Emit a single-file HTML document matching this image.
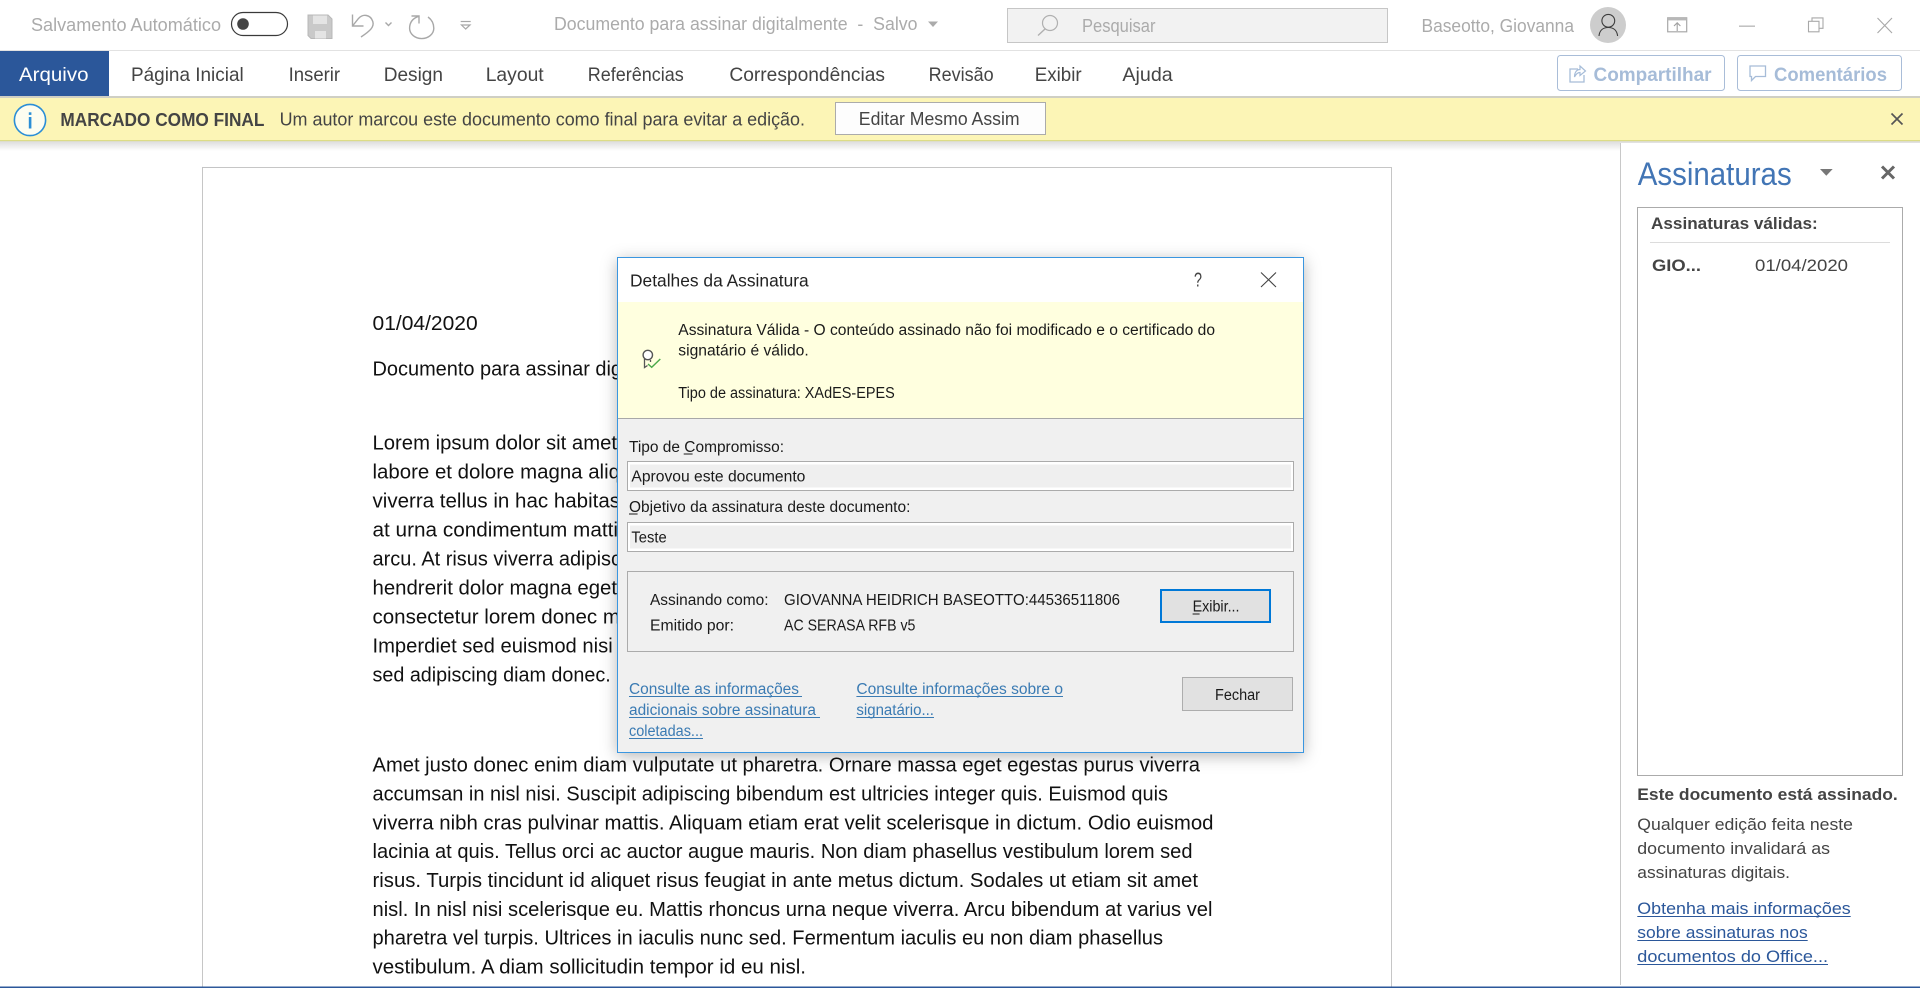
<!DOCTYPE html>
<html lang="pt-BR">
<head>
<meta charset="utf-8">
<title>Documento para assinar digitalmente</title>
<style>
html,body{margin:0;padding:0;background:#fff;width:1920px;height:988px;overflow:hidden}
svg{display:block;position:absolute;left:0;top:0}
text{font-family:"Liberation Sans",sans-serif;white-space:pre}
.tb{font-size:18px;fill:#ababab}
.tab{font-size:19.5px;fill:#444}
.act{font-size:19.5px;fill:#a6bcd8;font-weight:bold}
.bar{font-size:18.5px;fill:#444}
.doc{font-size:20px;fill:#111}
.dlg{font-size:15.5px;fill:#1a1a1a}
.lnk{font-size:15.5px;fill:#3b7bb3}
.pane{font-size:17px;fill:#444}
.paneb{font-size:17px;fill:#444;font-weight:bold}
.panel{font-size:17px;fill:#2b579a}
.ic{fill:none;stroke:#a8a8a8;stroke-width:1.4}
</style>
</head>
<body>
<svg width="1920" height="988" viewBox="0 0 1920 988" xmlns="http://www.w3.org/2000/svg">
<defs>
<linearGradient id="sh" x1="0" y1="0" x2="0" y2="1"><stop offset="0" stop-color="#d8d8d8"/><stop offset="1" stop-color="#fff"/></linearGradient>
<filter id="ds" x="-10%" y="-10%" width="120%" height="120%"><feDropShadow dx="0" dy="3" stdDeviation="8" flood-color="#000" flood-opacity=".3"/></filter>
</defs>

<!-- title bar -->
<rect x="0" y="50" width="1920" height="1" fill="#e2e2e2"/>
<text class="tb" x="31" y="31" textLength="190" lengthAdjust="spacingAndGlyphs">Salvamento Automático</text>
<rect x="231.5" y="12.5" width="56" height="23" rx="11.5" fill="#fff" stroke="#3a3a3a" stroke-width="1.2"/>
<circle cx="243" cy="24" r="5.8" fill="#444"/>
<!-- save -->
<path d="M308 15H328L332 19V38.5H311L308 35.5Z" fill="#c9c9c9" stroke="#b8b8b8"/>
<rect x="313" y="15.5" width="14" height="8.5" fill="#e4e4e4"/>
<rect x="315" y="31" width="11" height="7.5" fill="#e4e4e4"/>
<!-- undo -->
<path class="ic" d="M352.5 14.5V26H363.5M352.5 26L358.5 18.5C363 13.5 370.5 14.5 372.8 21.5C374.5 27 370 31 361 37"/>
<path class="ic" d="M385.5 22.5L388.5 25.5L391.5 22.5" stroke-width="1.2"/>
<!-- redo -->
<path class="ic" d="M411.5 16H419V23.5M418.8 16.3C412 18.5 409.6 23 409.6 28.3A12.1 10.3 0 0 0 433.8 28.3C433.8 23 431.5 19.5 428 17"/>
<!-- customize -->
<path d="M460.7 21.5H470.7" stroke="#a8a8a8" stroke-width="1.2"/>
<path d="M461.5 25H470L465.7 29Z" fill="none" stroke="#a8a8a8" stroke-width="1.2"/>

<text class="tb" x="554" y="30" textLength="363.5" lengthAdjust="spacingAndGlyphs">Documento para assinar digitalmente  -  Salvo</text>
<path d="M928 21.5H938L933 27Z" fill="#ababab"/>

<rect x="1007.5" y="8.5" width="380" height="34" fill="#f2f2f2" stroke="#c6c6c6"/>
<circle cx="1050" cy="23" r="7.5" fill="none" stroke="#b0b0b0" stroke-width="1.2"/>
<path d="M1045 29L1038 35.5" stroke="#b0b0b0" stroke-width="1.4"/>
<text class="tb" x="1082" y="32" textLength="73.5" lengthAdjust="spacingAndGlyphs">Pesquisar</text>

<text class="tb" x="1421.5" y="32" textLength="152.5" lengthAdjust="spacingAndGlyphs">Baseotto, Giovanna</text>
<circle cx="1608" cy="25" r="18" fill="#cdcdcd"/>
<circle cx="1608.3" cy="20.8" r="6.4" fill="none" stroke="#3c3c3c" stroke-width="1.1"/>
<path d="M1599 36C1599.5 30.5 1603 27.5 1608.3 27.5S1617 30.5 1617.6 36" fill="none" stroke="#3c3c3c" stroke-width="1.1"/>

<rect x="1667.7" y="17.8" width="19" height="14" fill="none" stroke="#a8a8a8" stroke-width="1.2"/>
<rect x="1667.7" y="17.8" width="19" height="2.6" fill="#b8b8b8"/>
<path d="M1677.2 31V23M1674 26L1677.2 22.8L1680.4 26" fill="none" stroke="#a0a0a0" stroke-width="1.1"/>
<rect x="1739" y="25.6" width="16" height="1.1" fill="#a8a8a8"/>
<rect x="1808.5" y="21.3" width="10.5" height="10.5" fill="none" stroke="#a8a8a8" stroke-width="1.1"/>
<path d="M1812 21V17.9H1823V28.3H1819" fill="none" stroke="#a8a8a8" stroke-width="1.1"/>
<path d="M1877.5 18L1892 33M1892 18L1877.5 33" stroke="#a8a8a8" stroke-width="1.1"/>

<!-- ribbon -->
<rect x="0" y="51" width="109" height="45" fill="#2b579a"/>
<text class="tab" style="fill:#fff" x="19" y="81" textLength="69.5" lengthAdjust="spacingAndGlyphs">Arquivo</text>
<text class="tab" x="131" y="81" textLength="112.7" lengthAdjust="spacingAndGlyphs">Página Inicial</text>
<text class="tab" x="288.6" y="81" textLength="51.5" lengthAdjust="spacingAndGlyphs">Inserir</text>
<text class="tab" x="383.7" y="81" textLength="59.3" lengthAdjust="spacingAndGlyphs">Design</text>
<text class="tab" x="485.7" y="81" textLength="58" lengthAdjust="spacingAndGlyphs">Layout</text>
<text class="tab" x="587.8" y="81" textLength="96" lengthAdjust="spacingAndGlyphs">Referências</text>
<text class="tab" x="729.4" y="81" textLength="155.6" lengthAdjust="spacingAndGlyphs">Correspondências</text>
<text class="tab" x="928.6" y="81" textLength="65" lengthAdjust="spacingAndGlyphs">Revisão</text>
<text class="tab" x="1034.7" y="81" textLength="47" lengthAdjust="spacingAndGlyphs">Exibir</text>
<text class="tab" x="1122.4" y="81" textLength="50.3" lengthAdjust="spacingAndGlyphs">Ajuda</text>

<rect x="1557.5" y="55.5" width="167" height="35" rx="3" fill="#fff" stroke="#a9bdd8"/>
<path d="M1578 69H1570V82H1584V75" fill="none" stroke="#a6bcd8" stroke-width="1.3"/>
<path d="M1574.5 77C1574.5 72 1577 69.5 1580 69.5V66L1585.5 71L1580 75.5V72.5C1578 72.5 1576 74 1574.5 77Z" fill="none" stroke="#a6bcd8" stroke-width="1.2"/>
<text class="act" x="1593.5" y="81" textLength="118" lengthAdjust="spacingAndGlyphs">Compartilhar</text>
<rect x="1737.5" y="55.5" width="164" height="35" rx="3" fill="#fff" stroke="#a9bdd8"/>
<path d="M1750 66H1765.5V76.5H1755.5L1751.5 80.5V76.5H1750Z" fill="none" stroke="#a6bcd8" stroke-width="1.3"/>
<text class="act" x="1774" y="81" textLength="113" lengthAdjust="spacingAndGlyphs">Comentários</text>

<!-- message bar -->
<rect x="0" y="140" width="1920" height="11" fill="url(#sh)"/>
<rect x="0" y="96" width="1920" height="44" fill="#fcf5b6"/>
<rect x="0" y="96" width="1920" height="2" fill="#cfcfc4"/>
<rect x="0" y="140" width="1920" height="1.2" fill="#dcdc86"/>
<circle cx="30" cy="120" r="15.6" fill="#fdfdf0" stroke="#2b8ed6" stroke-width="1.6"/>
<rect x="28.8" y="117" width="2.6" height="11.5" fill="#2b8ed6"/>
<rect x="28.8" y="112.3" width="2.6" height="2.6" fill="#2b8ed6"/>
<text class="bar" style="font-weight:bold" x="60.4" y="126" textLength="204" lengthAdjust="spacingAndGlyphs">MARCADO COMO FINAL</text>
<text class="bar" x="279.6" y="125.5" textLength="525.4" lengthAdjust="spacingAndGlyphs">Um autor marcou este documento como final para evitar a edição.</text>
<rect x="835.5" y="102.5" width="210" height="32" fill="#fdfdfd" stroke="#ababab"/>
<text class="bar" x="858.8" y="125" textLength="160.8" lengthAdjust="spacingAndGlyphs">Editar Mesmo Assim</text>
<path d="M1891.5 113.5L1902.5 124.5M1902.5 113.5L1891.5 124.5" stroke="#555" stroke-width="1.7"/>

<!-- page -->
<rect x="202.5" y="167.5" width="1189" height="830" fill="#fff" stroke="#c6c6c6"/>
<text class="doc" x="372.5" y="330" textLength="105.2" lengthAdjust="spacingAndGlyphs">01/04/2020</text>
<text class="doc" x="372.5" y="375.7" textLength="249.5" lengthAdjust="spacingAndGlyphs">Documento para assinar dig</text>
<text class="doc" x="372.5" y="449.3" textLength="244.5" lengthAdjust="spacingAndGlyphs">Lorem ipsum dolor sit amet</text>
<text class="doc" x="372.5" y="478.3" textLength="247.5" lengthAdjust="spacingAndGlyphs">labore et dolore magna aliq</text>
<text class="doc" x="372.5" y="507.3" textLength="247.5" lengthAdjust="spacingAndGlyphs">viverra tellus in hac habitas</text>
<text class="doc" x="372.5" y="536.3" textLength="245.5" lengthAdjust="spacingAndGlyphs">at urna condimentum matti</text>
<text class="doc" x="372.5" y="565.3" textLength="248.5" lengthAdjust="spacingAndGlyphs">arcu. At risus viverra adipisc</text>
<text class="doc" x="372.5" y="594.3" textLength="244.5" lengthAdjust="spacingAndGlyphs">hendrerit dolor magna eget</text>
<text class="doc" x="372.5" y="623.3" textLength="247.5" lengthAdjust="spacingAndGlyphs">consectetur lorem donec m</text>
<text class="doc" x="372.5" y="652.3" textLength="240.2" lengthAdjust="spacingAndGlyphs">Imperdiet sed euismod nisi</text>
<text class="doc" x="372.5" y="681.3" textLength="238.2" lengthAdjust="spacingAndGlyphs">sed adipiscing diam donec.</text>

<text class="doc" x="372.5" y="771.7" textLength="827.5" lengthAdjust="spacingAndGlyphs">Amet justo donec enim diam vulputate ut pharetra. Ornare massa eget egestas purus viverra</text>
<text class="doc" x="372.5" y="800.6" textLength="795.5" lengthAdjust="spacingAndGlyphs">accumsan in nisl nisi. Suscipit adipiscing bibendum est ultricies integer quis. Euismod quis</text>
<text class="doc" x="372.5" y="829.4" textLength="841" lengthAdjust="spacingAndGlyphs">viverra nibh cras pulvinar mattis. Aliquam etiam erat velit scelerisque in dictum. Odio euismod</text>
<text class="doc" x="372.5" y="858.2" textLength="820" lengthAdjust="spacingAndGlyphs">lacinia at quis. Tellus orci ac auctor augue mauris. Non diam phasellus vestibulum lorem sed</text>
<text class="doc" x="372.5" y="887" textLength="825.5" lengthAdjust="spacingAndGlyphs">risus. Turpis tincidunt id aliquet risus feugiat in ante metus dictum. Sodales ut etiam sit amet</text>
<text class="doc" x="372.5" y="915.8" textLength="840" lengthAdjust="spacingAndGlyphs">nisl. In nisl nisi scelerisque eu. Mattis rhoncus urna neque viverra. Arcu bibendum at varius vel</text>
<text class="doc" x="372.5" y="944.6" textLength="790.5" lengthAdjust="spacingAndGlyphs">pharetra vel turpis. Ultrices in iaculis nunc sed. Fermentum iaculis eu non diam phasellus</text>
<text class="doc" x="372.5" y="973.4" textLength="433.5" lengthAdjust="spacingAndGlyphs">vestibulum. A diam sollicitudin tempor id eu nisl.</text>

<!-- task pane -->
<rect x="1620" y="143" width="300" height="845" fill="#fff"/>
<rect x="1620" y="143" width="1" height="842" fill="#c8c8c8"/>
<text x="1637.7" y="185" textLength="154" lengthAdjust="spacingAndGlyphs" style="font-size:32px;fill:#4275b5">Assinaturas</text>
<path d="M1820 169H1832.7L1826.3 175.7Z" fill="#777"/>
<path d="M1882 166.5L1894 178.5M1894 166.5L1882 178.5" stroke="#666" stroke-width="3"/>
<rect x="1637.5" y="207.5" width="265" height="568" fill="#fff" stroke="#ababab"/>
<text class="paneb" x="1651" y="229" textLength="166.7" lengthAdjust="spacingAndGlyphs">Assinaturas válidas:</text>
<rect x="1650" y="242" width="240" height="1" fill="#dcdcdc"/>
<text class="paneb" x="1652" y="271" textLength="49" lengthAdjust="spacingAndGlyphs">GIO...</text>
<text class="pane" x="1755" y="271" textLength="93" lengthAdjust="spacingAndGlyphs">01/04/2020</text>
<text class="paneb" x="1637.3" y="800" textLength="260.4" lengthAdjust="spacingAndGlyphs">Este documento está assinado.</text>
<text class="pane" x="1637.3" y="830" textLength="215.7" lengthAdjust="spacingAndGlyphs">Qualquer edição feita neste</text>
<text class="pane" x="1637.3" y="854" textLength="192.7" lengthAdjust="spacingAndGlyphs">documento invalidará as</text>
<text class="pane" x="1637.3" y="878" textLength="152.7" lengthAdjust="spacingAndGlyphs">assinaturas digitais.</text>
<text class="panel" x="1637.3" y="914" textLength="213.4" lengthAdjust="spacingAndGlyphs">Obtenha mais informações</text>
<rect x="1637.3" y="916" width="213.4" height="1" fill="#2b579a"/>
<text class="panel" x="1637.3" y="938" textLength="170.4" lengthAdjust="spacingAndGlyphs">sobre assinaturas nos</text>
<rect x="1637.3" y="940" width="170.4" height="1" fill="#2b579a"/>
<text class="panel" x="1637.3" y="962" textLength="190.7" lengthAdjust="spacingAndGlyphs">documentos do Office...</text>
<rect x="1637.3" y="964" width="190.7" height="1" fill="#2b579a"/>

<rect x="0" y="986.5" width="1920" height="1.5" fill="#2b579a"/>

<!-- dialog -->
<rect x="617.5" y="257.5" width="686" height="495" fill="#f0f0f0" filter="url(#ds)"/>
<rect x="618" y="258" width="685" height="44" fill="#fff"/>
<rect x="618" y="302" width="685" height="116" fill="#ffffdf"/>
<rect x="618" y="418" width="685" height="1" fill="#a8a8a8"/>
<rect x="617.5" y="257.5" width="686" height="495" fill="none" stroke="#3a96e0"/>
<text x="630" y="286.5" textLength="178.7" lengthAdjust="spacingAndGlyphs" style="font-size:17.5px;fill:#222">Detalhes da Assinatura</text>
<text x="1194" y="286.5" textLength="8" lengthAdjust="spacingAndGlyphs" style="font-size:20px;fill:#444">?</text>
<path d="M1261 272.5L1276 287M1276 272.5L1261 287" stroke="#444" stroke-width="1.1"/>

<circle cx="647.8" cy="355" r="4.7" fill="#fff" stroke="#555" stroke-width="1.4"/>
<path d="M644.5 359V367.5L647.5 365.5M650.5 360V362" fill="none" stroke="#555" stroke-width="1.3"/>
<path d="M648 364L651.7 367.3L660.3 359" fill="none" stroke="#4aa84a" stroke-width="1.4"/>

<text class="dlg" x="678.3" y="335" textLength="536.7" lengthAdjust="spacingAndGlyphs">Assinatura Válida - O conteúdo assinado não foi modificado e o certificado do</text>
<text class="dlg" x="678.3" y="355.5" textLength="130.4" lengthAdjust="spacingAndGlyphs">signatário é válido.</text>
<text class="dlg" x="678.3" y="398" textLength="216.5" lengthAdjust="spacingAndGlyphs">Tipo de assinatura: XAdES-EPES</text>

<text class="dlg" x="629" y="452" textLength="155" lengthAdjust="spacingAndGlyphs">Tipo de Compromisso:</text>
<rect x="683.7" y="453.5" width="8.9" height="1" fill="#1a1a1a"/>
<rect x="627.5" y="461.5" width="666" height="29" fill="#fff" stroke="#ababab"/>
<rect x="630" y="464.5" width="661" height="23" fill="#efefef"/>
<text class="dlg" x="631.4" y="481.5" textLength="174" lengthAdjust="spacingAndGlyphs">Aprovou este documento</text>

<text class="dlg" x="629" y="512" textLength="281.4" lengthAdjust="spacingAndGlyphs">Objetivo da assinatura deste documento:</text>
<rect x="629" y="513.5" width="8.6" height="1" fill="#1a1a1a"/>
<rect x="627.5" y="522.5" width="666" height="29" fill="#fff" stroke="#ababab"/>
<rect x="630" y="525.5" width="661" height="23" fill="#efefef"/>
<text class="dlg" x="631.4" y="542.3" textLength="35.3" lengthAdjust="spacingAndGlyphs">Teste</text>

<rect x="627.5" y="571.5" width="666" height="80" fill="none" stroke="#ababab"/>
<text class="dlg" x="650" y="605" textLength="118.5" lengthAdjust="spacingAndGlyphs">Assinando como:</text>
<text class="dlg" x="784" y="605" textLength="336" lengthAdjust="spacingAndGlyphs">GIOVANNA HEIDRICH BASEOTTO:44536511806</text>
<text class="dlg" x="650" y="630.5" textLength="84" lengthAdjust="spacingAndGlyphs">Emitido por:</text>
<text class="dlg" x="784" y="630.5" textLength="131.4" lengthAdjust="spacingAndGlyphs">AC SERASA RFB v5</text>
<rect x="1161" y="590" width="109" height="32" fill="#e1e1e1" stroke="#0078d7" stroke-width="2"/>
<text class="dlg" x="1192.6" y="611.5" textLength="46.9" lengthAdjust="spacingAndGlyphs">Exibir...</text>
<rect x="1192.6" y="613.5" width="7" height="1" fill="#1a1a1a"/>

<text class="lnk" x="629" y="694" textLength="170" lengthAdjust="spacingAndGlyphs">Consulte as informações</text>
<rect x="629" y="696" width="173" height="1" fill="#3b7bb3"/>
<text class="lnk" x="629" y="715" textLength="187" lengthAdjust="spacingAndGlyphs">adicionais sobre assinatura</text>
<rect x="629" y="717" width="191" height="1" fill="#3b7bb3"/>
<text class="lnk" x="629" y="736" textLength="74" lengthAdjust="spacingAndGlyphs">coletadas...</text>
<rect x="629" y="738" width="74" height="1" fill="#3b7bb3"/>
<text class="lnk" x="856.4" y="694" textLength="206.6" lengthAdjust="spacingAndGlyphs">Consulte informações sobre o</text>
<rect x="856.4" y="696" width="206.6" height="1" fill="#3b7bb3"/>
<text class="lnk" x="856.4" y="715" textLength="77.6" lengthAdjust="spacingAndGlyphs">signatário...</text>
<rect x="856.4" y="717" width="77.6" height="1" fill="#3b7bb3"/>

<rect x="1182.5" y="677.5" width="110" height="33" fill="#e1e1e1" stroke="#adadad"/>
<text class="dlg" x="1215" y="700" textLength="45" lengthAdjust="spacingAndGlyphs">Fechar</text>
</svg>
</body>
</html>
